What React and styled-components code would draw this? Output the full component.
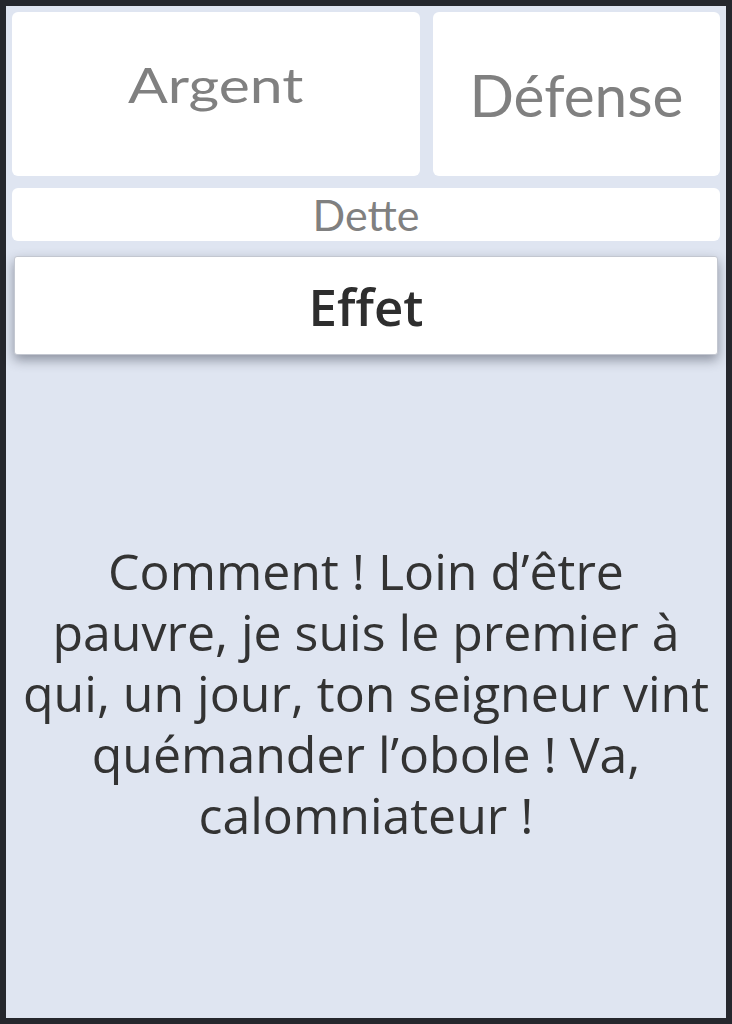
import { createGlobalStyle, styled } from "styled-components";

const GlobalStyle = createGlobalStyle`
  html, body {
    margin: 0;
    padding: 0;
    background: #25272d;
  }
`;

const Frame = styled.div`
  box-sizing: border-box;
  width: 732px;
  height: 1024px;
  padding: 6px;
  background: #25272d;
`;

const Screen = styled.div`
  box-sizing: border-box;
  height: 100%;
  display: flex;
  flex-direction: column;
  padding: 6px;
  background: #dfe5f1;
`;

const TopRow = styled.div`
  display: grid;
  grid-template-columns: 408px 1fr;
  gap: 13px;
  height: 164px;
`;

const StatCard = styled.div`
  display: flex;
  justify-content: center;
  align-items: ${(p) => (p.$raised ? "flex-start" : "center")};
  padding-top: ${(p) => (p.$raised ? "44px" : "0")};
  box-sizing: border-box;
  background: #ffffff;
  border-radius: 6px;
  color: #808080;
  font-family: Lato, "Liberation Sans", sans-serif;
  font-size: ${(p) => p.$size || "52px"};
  line-height: 1.2;
`;

const StatLabel = styled.span`
  display: inline-block;
  transform: scaleX(${(p) => p.$stretch || 1});
`;

const DebtBar = styled.div`
  margin-top: 12px;
  height: 53px;
  display: flex;
  justify-content: center;
  align-items: center;
  background: #ffffff;
  border-radius: 6px;
  color: #808080;
  font-family: Lato, "Liberation Sans", sans-serif;
  font-size: 43px;
`;

const EffectHeader = styled.div`
  margin: 15px 2px 0;
  height: 99px;
  box-sizing: border-box;
  display: flex;
  justify-content: center;
  align-items: center;
  background: #ffffff;
  border: 1px solid #c3c7d0;
  border-radius: 3px;
  box-shadow: 0 5px 12px rgba(40, 45, 60, 0.45);
  color: #2e2e2e;
  font-family: "Open Sans", "Noto Sans", sans-serif;
  font-weight: 600;
  font-size: 51px;
`;

const EffectBody = styled.div`
  flex: 1;
  display: flex;
  align-items: center;
  justify-content: center;
  padding: 20px 7px 0;
  color: #333333;
  font-family: "Open Sans", "Noto Sans", sans-serif;
  font-size: 50px;
  line-height: 61px;
  text-align: center;
`;

export default function App() {
  return (
    <>
      <GlobalStyle />
      <Frame>
        <Screen>
          <TopRow>
            <StatCard $raised $size="47.5px">
              <StatLabel $stretch={1.24}>Argent</StatLabel>
            </StatCard>
            <StatCard $size="58.5px">
              <StatLabel>Défense</StatLabel>
            </StatCard>
          </TopRow>
          <DebtBar>Dette</DebtBar>
          <EffectHeader>Effet</EffectHeader>
          <EffectBody>
            Comment ! Loin d’être pauvre, je suis le premier à qui, un jour,
            ton seigneur vint quémander l’obole ! Va, calomniateur !
          </EffectBody>
        </Screen>
      </Frame>
    </>
  );
}
